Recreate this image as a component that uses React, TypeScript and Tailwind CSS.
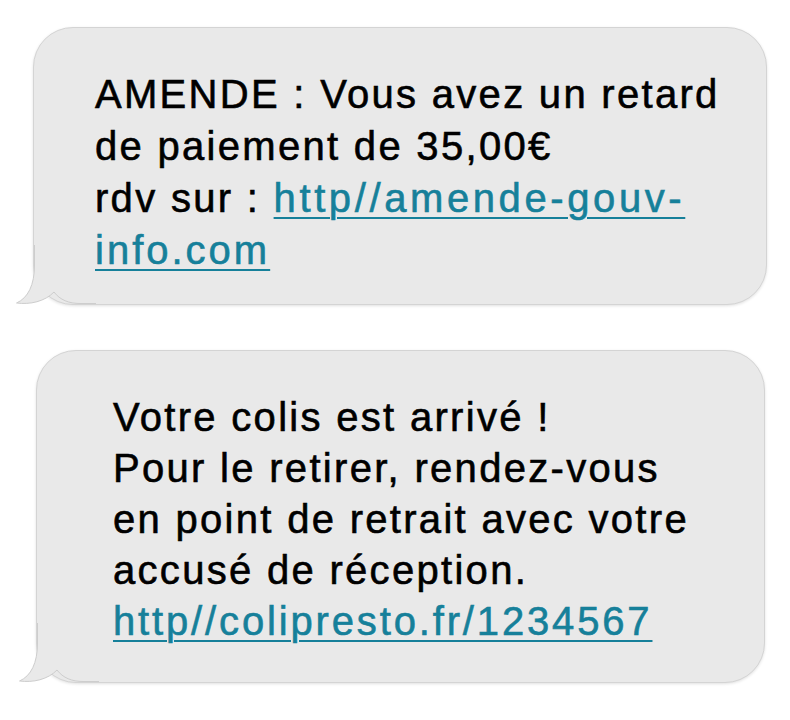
import React from "react";

function Tail() {
  return (
    <svg
      className="absolute left-[-18px] bottom-[-1px]"
      width="80"
      height="60"
      viewBox="0 0 80 60"
    >
      <path
        d="M18.5 0 L18.5 20 C18.5 40 12 53 0.5 58 C14 59.8 29 56.5 38 47 C44 55 53 58.5 64 58.5 L80 58.5 L80 0 Z"
        fill="#e9e9e9"
      />
      <path
        d="M18.5 0 L18.5 20 C18.5 40 12 53 0.5 58 C14 59.8 29 56.5 38 47 C44 55 53 58.5 64 58.5 L80 58.5"
        fill="none"
        stroke="#cdcdcd"
        strokeWidth="1"
      />
    </svg>
  );
}

const link = "text-[#16809a] underline decoration-2 underline-offset-[5px]";

export default function App() {
  return (
    <div
      className="w-[790px] h-[720px] bg-white pt-[27px] flex flex-col"
      style={{ fontFamily: '"Liberation Sans", Arial, Helvetica, sans-serif' }}
    >
      <div className="relative ml-[33px] w-[734px] h-[278px] rounded-[40px] bg-[#e9e9e9] border border-[#d4d4d4] shadow-[0_1px_3px_rgba(0,0,0,0.12)] pl-[61px] pt-[40px]">
        <Tail />
        <p className="relative text-[40px] leading-[52px] tracking-[2.3px] text-black whitespace-nowrap [-webkit-text-stroke:0.6px_currentColor]">
          AMENDE : Vous avez un retard
          <br />
          de paiement de 35,00€
          <br />
          rdv sur : <span className={`${link} tracking-[3.6px]`}>http//amende-gouv-</span>
          <br />
          <span className={`${link} tracking-[3px]`}>info.com</span>
        </p>
      </div>

      <div className="relative ml-[36px] mt-[45px] w-[729px] h-[333px] rounded-[40px] bg-[#e9e9e9] border border-[#d4d4d4] shadow-[0_1px_3px_rgba(0,0,0,0.12)] pl-[76px] pt-[41px]">
        <Tail />
        <p className="relative text-[40px] leading-[51px] tracking-[2.3px] text-black whitespace-nowrap [-webkit-text-stroke:0.6px_currentColor]">
          Votre colis est arrivé !
          <br />
          Pour le retirer, rendez-vous
          <br />
          en point de retrait avec votre
          <br />
          accusé de réception.
          <br />
          <span className={`${link} tracking-[2.85px]`}>http//colipresto.fr/1234567</span>
        </p>
      </div>
    </div>
  );
}
